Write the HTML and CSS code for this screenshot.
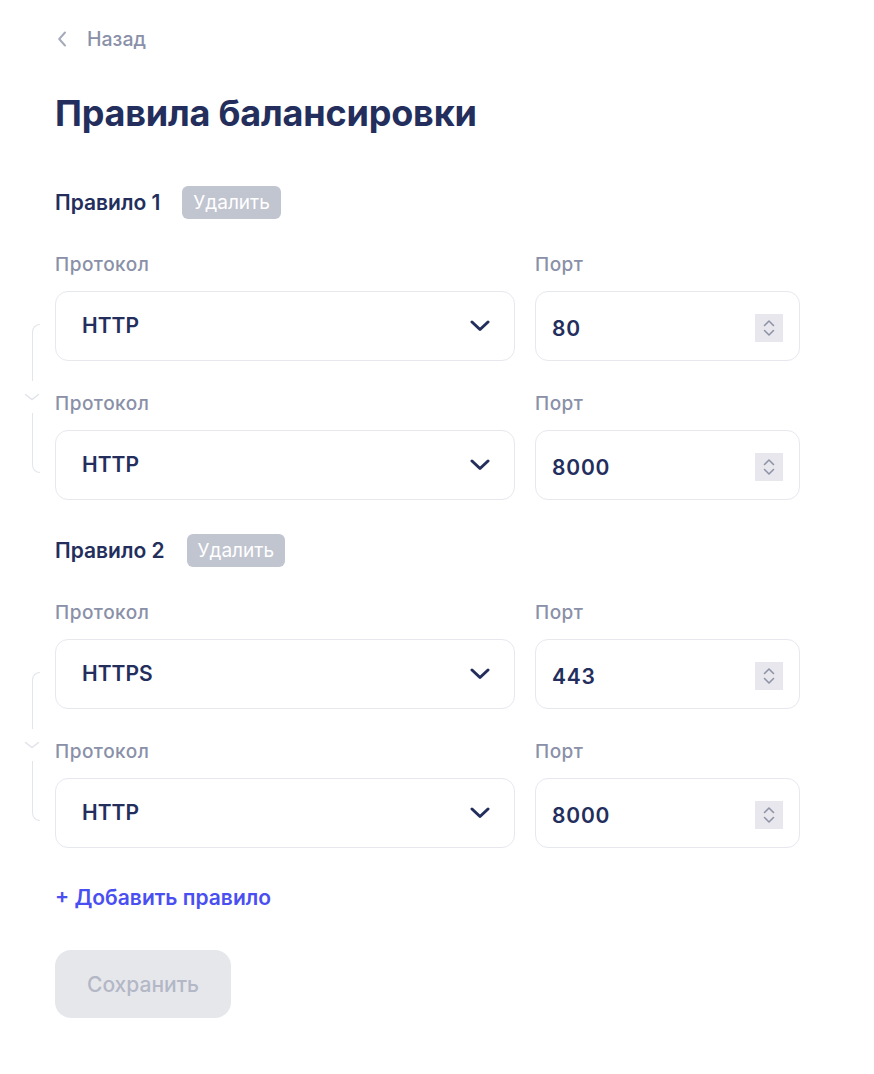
FILE: index.html
```html
<!DOCTYPE html>
<html lang="ru">
<head>
<meta charset="utf-8">
<title>Правила балансировки</title>
<link rel="stylesheet" href="styles.css">
</head>
<body>
<main class="page">
  <a class="back" href="#">
    <svg class="back-icon" width="10" height="16" viewBox="0 0 10 16"><path d="M8 1.5 L2.2 8 L8 14.5" fill="none" stroke="#a6abbb" stroke-width="2" stroke-linecap="round" stroke-linejoin="round"/></svg>
    <span>Назад</span>
  </a>

  <h1 class="title">Правила балансировки</h1>

  <section class="rule">
    <div class="rule-head">
      <span class="rule-name">Правило 1</span>
      <button class="delete">Удалить</button>
    </div>
    <div class="rule-body">
      <div class="connector">
        <div class="seg seg-top"></div>
        <svg class="conn-chev" width="16" height="8" viewBox="0 0 16 8"><path d="M1.5 1.5 L8 6.5 L14.5 1.5" fill="none" stroke="#e1e3ea" stroke-width="1.5" stroke-linecap="round"/></svg>
        <div class="seg seg-bottom"></div>
      </div>
      <div class="fields">
        <div class="field">
          <div class="label">Протокол</div>
          <div class="box select"><span class="value">HTTP</span>
            <svg class="chev" width="20" height="12" viewBox="0 0 20 12"><path d="M2 2 L10 9.5 L18 2" fill="none" stroke="#232e5c" stroke-width="3" stroke-linecap="round" stroke-linejoin="round"/></svg></div>
        </div>
        <div class="field">
          <div class="label">Порт</div>
          <div class="box port"><span class="value num">80</span>
            <svg class="stepper" width="28" height="28" viewBox="0 0 28 28"><rect width="28" height="28" fill="#e7e7ed"/><path d="M9.5 11.5 L14 7 L18.5 11.5 M9.5 16.5 L14 21 L18.5 16.5" fill="none" stroke="#8f93a6" stroke-width="1.6" stroke-linecap="round" stroke-linejoin="round"/></svg></div>
        </div>
        <div class="field">
          <div class="label">Протокол</div>
          <div class="box select"><span class="value">HTTP</span>
            <svg class="chev" width="20" height="12" viewBox="0 0 20 12"><path d="M2 2 L10 9.5 L18 2" fill="none" stroke="#232e5c" stroke-width="3" stroke-linecap="round" stroke-linejoin="round"/></svg></div>
        </div>
        <div class="field">
          <div class="label">Порт</div>
          <div class="box port"><span class="value num">8000</span>
            <svg class="stepper" width="28" height="28" viewBox="0 0 28 28"><rect width="28" height="28" fill="#e7e7ed"/><path d="M9.5 11.5 L14 7 L18.5 11.5 M9.5 16.5 L14 21 L18.5 16.5" fill="none" stroke="#8f93a6" stroke-width="1.6" stroke-linecap="round" stroke-linejoin="round"/></svg></div>
        </div>
      </div>
    </div>
  </section>

  <section class="rule">
    <div class="rule-head">
      <span class="rule-name">Правило 2</span>
      <button class="delete">Удалить</button>
    </div>
    <div class="rule-body">
      <div class="connector">
        <div class="seg seg-top"></div>
        <svg class="conn-chev" width="16" height="8" viewBox="0 0 16 8"><path d="M1.5 1.5 L8 6.5 L14.5 1.5" fill="none" stroke="#e1e3ea" stroke-width="1.5" stroke-linecap="round"/></svg>
        <div class="seg seg-bottom"></div>
      </div>
      <div class="fields">
        <div class="field">
          <div class="label">Протокол</div>
          <div class="box select"><span class="value">HTTPS</span>
            <svg class="chev" width="20" height="12" viewBox="0 0 20 12"><path d="M2 2 L10 9.5 L18 2" fill="none" stroke="#232e5c" stroke-width="3" stroke-linecap="round" stroke-linejoin="round"/></svg></div>
        </div>
        <div class="field">
          <div class="label">Порт</div>
          <div class="box port"><span class="value num">443</span>
            <svg class="stepper" width="28" height="28" viewBox="0 0 28 28"><rect width="28" height="28" fill="#e7e7ed"/><path d="M9.5 11.5 L14 7 L18.5 11.5 M9.5 16.5 L14 21 L18.5 16.5" fill="none" stroke="#8f93a6" stroke-width="1.6" stroke-linecap="round" stroke-linejoin="round"/></svg></div>
        </div>
        <div class="field">
          <div class="label">Протокол</div>
          <div class="box select"><span class="value">HTTP</span>
            <svg class="chev" width="20" height="12" viewBox="0 0 20 12"><path d="M2 2 L10 9.5 L18 2" fill="none" stroke="#232e5c" stroke-width="3" stroke-linecap="round" stroke-linejoin="round"/></svg></div>
        </div>
        <div class="field">
          <div class="label">Порт</div>
          <div class="box port"><span class="value num">8000</span>
            <svg class="stepper" width="28" height="28" viewBox="0 0 28 28"><rect width="28" height="28" fill="#e7e7ed"/><path d="M9.5 11.5 L14 7 L18.5 11.5 M9.5 16.5 L14 21 L18.5 16.5" fill="none" stroke="#8f93a6" stroke-width="1.6" stroke-linecap="round" stroke-linejoin="round"/></svg></div>
        </div>
      </div>
    </div>
  </section>

  <a class="add" href="#">+ Добавить правило</a>

  <button class="save" disabled>Сохранить</button>
</main>
</body>
</html>
```

FILE: styles.css
```css
* { box-sizing: border-box; }

html, body {
  margin: 0;
  background: #ffffff;
}

body {
  font-family: Inter, "Noto Sans", "Liberation Sans", sans-serif;
  color: #232e5c;
}

.page {
  padding: 28px 0 40px 55px;
}

.back {
  display: flex;
  align-items: center;
  gap: 20px;
  height: 22px;
  padding-left: 2px;
  color: #8990a8;
  text-decoration: none;
  font-size: 19.5px;
  line-height: 22px;
  font-weight: 500;
}

.back-icon { display: block; }

.title {
  margin: 41px 0 0;
  font-size: 36px;
  line-height: 44px;
  font-weight: 700;
  letter-spacing: -0.2px;
  color: #232e5c;
}

.rule {
  margin-top: 51px;
}

.rule + .rule {
  margin-top: 34px;
}

.rule-head {
  display: flex;
  align-items: center;
  gap: 22px;
  height: 33px;
}

.rule-name {
  font-size: 21px;
  font-weight: 600;
  color: #232e5c;
}

.delete {
  height: 33px;
  padding: 0 11px;
  border: none;
  border-radius: 6px;
  background: #c1c5d0;
  color: #ffffff;
  font-family: inherit;
  font-size: 19px;
  font-weight: 400;
  line-height: 33px;
}

.rule-body {
  display: flex;
  margin-top: 35px;
  margin-left: -31px;
}

.connector {
  width: 16px;
  margin-right: 15px;
  display: flex;
  flex-direction: column;
  padding-top: 70px;
}

.seg {
  width: 8px;
  margin-left: 8px;
  border-left: 1.5px solid #e3e5eb;
}

.seg-top {
  height: 57px;
  border-top: 1.5px solid #e3e5eb;
  border-top-left-radius: 9px;
}

.seg-bottom {
  height: 60px;
  border-bottom: 1.5px solid #e3e5eb;
  border-bottom-left-radius: 9px;
}

.conn-chev {
  display: block;
  margin: 12px 0 12px 0;
}

.fields {
  display: grid;
  grid-template-columns: 460px 265px;
  column-gap: 20px;
  row-gap: 32px;
}

.label {
  font-size: 19px;
  line-height: 22px;
  font-weight: 500;
  letter-spacing: 0.5px;
  color: #8990a8;
  margin-bottom: 15px;
}

.box {
  height: 70px;
  border: 1px solid #e6e8ee;
  border-radius: 13px;
  display: flex;
  align-items: center;
  justify-content: space-between;
}

.select {
  padding: 0 24px 0 26px;
}

.port {
  padding: 0 16px 0 16px;
}

.value {
  font-size: 21px;
  font-weight: 600;
  color: #232e5c;
  margin-top: -1px;
}

.value.num {
  margin-top: 4px;
  letter-spacing: 0.8px;
}

.chev, .stepper { display: block; }

.stepper { margin-top: 3px; }

.add {
  display: block;
  margin-top: 38px;
  font-size: 21px;
  line-height: 24px;
  font-weight: 600;
  color: #4a4ff2;
  text-decoration: none;
}

.save {
  display: block;
  margin-top: 40px;
  width: 176px;
  height: 68px;
  border: none;
  border-radius: 16px;
  background: #e6e7eb;
  color: #b3b7c6;
  font-family: inherit;
  font-size: 21px;
  font-weight: 500;
}
```
